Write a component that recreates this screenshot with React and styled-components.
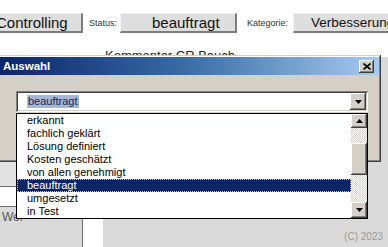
import React from 'react';
import styled, { createGlobalStyle } from 'styled-components';

const Global = createGlobalStyle`
  html, body { margin: 0; padding: 0; }
  body {
    width: 388px; height: 247px; overflow: hidden; background: #fff;
    font-family: "Liberation Sans", Arial, sans-serif;
  }
`;

const Page = styled.div`
  position: relative;
  width: 388px;
  height: 247px;
  overflow: hidden;
  display: flex;
  flex-direction: column;
  background: #fff;
`;

const TopArea = styled.div`
  height: 57px;
  flex: none;
  background: #fff;
  display: flex;
  flex-direction: column;
`;

const Toolbar = styled.div`
  display: flex;
  align-items: center;
  height: 20px;
  margin-top: 13px;
  margin-left: -40px;
`;

const ToolButton = styled.div`
  box-sizing: border-box;
  flex: none;
  width: ${p => p.$w}px;
  height: 20px;
  padding-left: ${p => p.$pl}px;
  background: #dedede;
  border-top: 1px solid #f2f2f2;
  border-left: 1px solid #f2f2f2;
  border-right: 2px solid #7c7c7c;
  border-bottom: 2px solid #7c7c7c;
  font-size: ${p => p.$fs || 15}px;
  line-height: 17px;
  color: #111;
  white-space: nowrap;
  overflow: hidden;
`;

const FieldLabel = styled.span`
  box-sizing: border-box;
  flex: none;
  width: ${p => p.$w}px;
  padding-left: ${p => p.$pl}px;
  font-size: 9px;
  color: #333;
  white-space: nowrap;
`;

const CommentLine = styled.div`
  margin: 15px 0 0 105px;
  font-size: 13px;
  color: #222;
  white-space: nowrap;
`;

const Lower = styled.div`
  flex: 1;
  display: grid;
  grid-template-columns: 82px 1px 20px 1fr;
`;

const LeftCol = styled.div`
  display: flex;
  flex-direction: column;
`;

const LeftBlock = styled.div`
  box-sizing: border-box;
  height: ${p => p.$h ? `${p.$h}px` : 'auto'};
  flex: ${p => p.$h ? 'none' : 1};
  background: ${p => p.$bg};
  border-bottom: ${p => p.$line ? '1px solid #6c6c6c' : 'none'};
  font-size: 12px;
  color: #555;
  padding: ${p => p.$pad || 0};
`;

const VRule = styled.div`
  background: ${p => p.$c};
`;

const WhiteGap = styled.div`
  background: #fff;
`;

const RightPanel = styled.div`
  background: #dadada;
  display: flex;
  align-items: flex-end;
  justify-content: flex-end;
  padding: 0 5px 5px 0;
`;

const Copyright = styled.span`
  font-size: 10px;
  color: #9a9a9a;
`;

/* ---------- dialog ---------- */

const Dialog = styled.div`
  position: absolute;
  left: -3px;
  top: 55px;
  width: 384px;
  height: 107px;
  box-sizing: border-box;
  padding: 2px;
  background: #d4d0c8;
  box-shadow: inset -1px -1px #404040, inset 1px 1px #d4d0c8,
    inset -2px -2px #808080, inset 2px 2px #fff;
  display: flex;
  flex-direction: column;
`;

const TitleBar = styled.div`
  height: 18px;
  display: flex;
  align-items: center;
  justify-content: space-between;
  padding: 0 5px 0 4px;
  background: linear-gradient(90deg, #0a246a 0%, #3a6ea5 50%, #a6caf0 100%);
`;

const Title = styled.span`
  font-size: 11.5px;
  font-weight: bold;
  color: #fff;
`;

const Bevel = styled.div`
  box-sizing: border-box;
  background: #d4d0c8;
  box-shadow: inset -1px -1px #404040, inset 1px 1px #fff,
    inset -2px -2px #808080, inset 2px 2px #d4d0c8;
  display: flex;
  align-items: center;
  justify-content: center;
  width: ${p => p.$w}px;
  height: ${p => p.$h}px;
  flex: none;
`;

const DialogBody = styled.div`
  flex: 1;
  padding: 16px 0 0 17px;
`;

const Combo = styled.div`
  box-sizing: border-box;
  width: 352px;
  height: 21px;
  padding: 2px;
  background: #fff;
  box-shadow: inset 1px 1px #808080, inset -1px -1px #fff,
    inset 2px 2px #404040, inset -2px -2px #d4d0c8;
  display: flex;
  align-items: center;
  justify-content: space-between;
`;

const ComboText = styled.span`
  margin-left: 9px;
  padding: 0 1px;
  font-size: 11px;
  line-height: 13px;
  background: #a8b6d6;
  color: #1b2550;
`;

const ListPopup = styled.div`
  position: absolute;
  left: 16px;
  top: 113px;
  width: 352px;
  height: 106px;
  box-sizing: border-box;
  border: 1px solid #000;
  background: #fff;
  display: flex;
`;

const Items = styled.div`
  flex: 1;
  display: flex;
  flex-direction: column;
`;

const Item = styled.div`
  height: 13px;
  line-height: 13px;
  font-size: 11px;
  padding-left: 10px;
  color: ${p => p.$sel ? '#fff' : '#000'};
  background: ${p => p.$sel ? '#0a246a' : 'transparent'};
  outline: ${p => p.$sel ? '1px dotted #d8c898' : 'none'};
  outline-offset: -1px;
  white-space: nowrap;
`;

const ScrollBar = styled.div`
  width: 16px;
  display: flex;
  flex-direction: column;
`;

const Track = styled.div`
  height: ${p => p.$h}px;
  background: repeating-conic-gradient(#d4d0c8 0 25%, #fff 0 50%) 0 0 / 2px 2px;
`;

const Arrow = ({ up }) => (
  <svg width="7" height="4" viewBox="0 0 7 4">
    <path d={up ? 'M3.5 0 L7 4 L0 4 Z' : 'M0 0 L7 0 L3.5 4 Z'} fill="#000" />
  </svg>
);

const CloseGlyph = () => (
  <svg width="8" height="7" viewBox="0 0 8 7">
    <path d="M0.5 0.5 L7.5 6.5 M7.5 0.5 L0.5 6.5" stroke="#000" strokeWidth="1.6" />
  </svg>
);

const options = [
  'erkannt',
  'fachlich geklärt',
  'Lösung definiert',
  'Kosten geschätzt',
  'von allen genehmigt',
  'beauftragt',
  'umgesetzt',
  'in Test',
];

export default function App() {
  return (
    <Page>
      <Global />
      <TopArea>
        <Toolbar>
          <ToolButton $w={123} $pl={35}>Controlling</ToolButton>
          <FieldLabel $w={37} $pl={6}>Status:</FieldLabel>
          <ToolButton $w={117} $pl={31}>beauftragt</ToolButton>
          <FieldLabel $w={56} $pl={10}>Kategorie:</FieldLabel>
          <ToolButton $w={120} $pl={17} $fs={13.5}>Verbesserung</ToolButton>
        </Toolbar>
        <CommentLine>Kommentar  CR Bauch</CommentLine>
      </TopArea>
      <Lower>
        <LeftCol>
          <LeftBlock $h={94} $bg="#d4d0c8" $line />
          <LeftBlock $h={36} $bg="#e2e2e2" $line />
          <LeftBlock $h={20} $bg="#fff" $line />
          <LeftBlock $bg="#dadada" $pad="3px 0 0 2px">Wer</LeftBlock>
        </LeftCol>
        <VRule $c="#6c6c6c" />
        <WhiteGap />
        <RightPanel>
          <Copyright>(C) 2023</Copyright>
        </RightPanel>
      </Lower>

      <Dialog>
        <TitleBar>
          <Title>Auswahl</Title>
          <Bevel $w={15} $h={13}><CloseGlyph /></Bevel>
        </TitleBar>
        <DialogBody>
          <Combo>
            <ComboText>beauftragt</ComboText>
            <Bevel $w={16} $h={17}><Arrow /></Bevel>
          </Combo>
        </DialogBody>
      </Dialog>

      <ListPopup>
        <Items>
          {options.map(o => (
            <Item key={o} $sel={o === 'beauftragt'}>{o}</Item>
          ))}
        </Items>
        <ScrollBar>
          <Bevel $w={16} $h={14}><Arrow up /></Bevel>
          <Track $h={15} />
          <Bevel $w={16} $h={32} />
          <Track $h={27} />
          <Bevel $w={16} $h={16}><Arrow /></Bevel>
        </ScrollBar>
      </ListPopup>
    </Page>
  );
}
